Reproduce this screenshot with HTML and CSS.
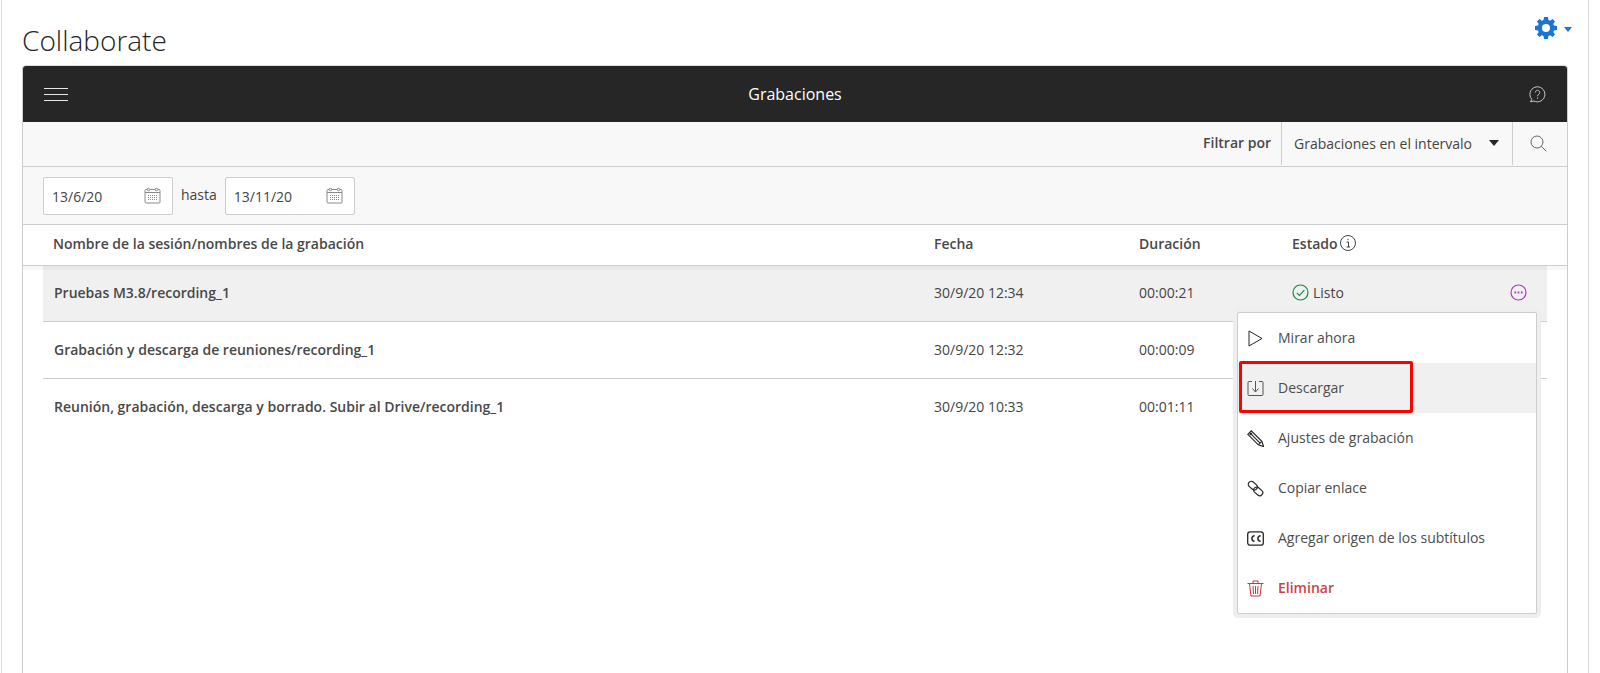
FILE: index.html
```html
<!DOCTYPE html>
<html lang="es">
<head>
<meta charset="utf-8">
<title>Collaborate</title>
<link rel="stylesheet" href="styles.css">
</head>
<body>
<div class="page">
  <div class="gear">
    <svg width="22" height="22" viewBox="0 0 22 22"><path fill="#1b76d3" fill-rule="evenodd" d="M9 0h4l.5 3 1.600.7L17.600 2 20 4.400l-1.700 2.500.7 1.600 3 .5v4l-3 .5-.7 1.600 1.700 2.500L17.600 20l-2.500-1.700-1.600.7-.5 3H9l-.5-3-1.600-.7L4.400 20 2 17.600l1.700-2.500-.7-1.600-3-.5v-4l3-.5.7-1.600L2 4.400 4.400 2l2.500 1.700 1.600-.7zM11 7a4 4 0 1 0 0 8 4 4 0 0 0 0-8z"/></svg>
    <span class="gear-caret"></span>
  </div>
  <h1 class="title">Collaborate</h1>
  <div class="panel">
    <header class="topbar">
      <span class="burger"><i></i><i></i><i></i></span>
      <span class="topbar-title">Grabaciones</span>
      <svg class="help" width="17" height="17" viewBox="0 0 17 17" fill="none" stroke="#c8c8c8"><path d="M2.800 13.300A7.500 7.500 0 1 1 5 15l-3.500.8z"/><path d="M6.300 6.500a2.200 2.200 0 1 1 3.400 1.900c-.8.5-1.200.9-1.200 1.900"/><path d="M8.500 11.500v1.300"/></svg>
    </header>
    <div class="filterbar">
      <span class="filter-label">Filtrar por</span>
      <span class="filter-select">Grabaciones en el intervalo<span class="select-caret"></span></span>
      <span class="filter-search">
        <svg width="17" height="17" viewBox="0 0 17 17" fill="none" stroke="#666"><circle cx="7" cy="7" r="6"/><path d="M11.300 11.300l5 5"/></svg>
      </span>
    </div>
    <div class="daterow">
      <span class="datebox">13/6/20
        <svg class="cal" width="17" height="17" viewBox="0 0 17 17" fill="none" stroke="#8a8a8a"><rect x="1" y="2.500" width="15" height="13.500" rx="1"/><path d="M1 5.500h15"/><circle cx="4.500" cy="2.500" r="1.300" fill="#f8f8f8"/><circle cx="12.500" cy="2.500" r="1.300" fill="#f8f8f8"/><path d="M4 8.500h9.500M4 10.500h9.500M4 12.500h9.500" stroke-dasharray="1 1"/></svg>
      </span>
      <span class="hasta">hasta</span>
      <span class="datebox">13/11/20
        <svg class="cal" width="17" height="17" viewBox="0 0 17 17" fill="none" stroke="#8a8a8a"><rect x="1" y="2.500" width="15" height="13.500" rx="1"/><path d="M1 5.500h15"/><circle cx="4.500" cy="2.500" r="1.300" fill="#f8f8f8"/><circle cx="12.500" cy="2.500" r="1.300" fill="#f8f8f8"/><path d="M4 8.500h9.500M4 10.500h9.500M4 12.500h9.500" stroke-dasharray="1 1"/></svg>
      </span>
    </div>
    <div class="thead">
      <span class="c-name">Nombre de la sesión/nombres de la grabación</span>
      <span class="c-date">Fecha</span>
      <span class="c-dur">Duración</span>
      <span class="c-state">Estado
        <svg class="info" width="16" height="16" viewBox="0 0 16 16" fill="none" stroke="#444"><circle cx="8" cy="8" r="7.500"/><path d="M6.500 7h2v5M6.500 12h3.500M8 3.800v1.400"/></svg>
      </span>
    </div>
    <div class="rows">
      <div class="row row-active">
        <span class="c-name">Pruebas M3.8/recording_1</span>
        <span class="c-date">30/9/20 12:34</span>
        <span class="c-dur">00:00:21</span>
        <span class="c-state state-ok">
          <svg width="17" height="17" viewBox="0 0 17 17" fill="none" stroke="#1a8a45" stroke-width="1.200"><circle cx="8.500" cy="8.500" r="7.500"/><path d="M4.800 8.800l2.600 2.600 5-5.200"/></svg>
          Listo
        </span>
        <svg class="more" width="17" height="17" viewBox="0 0 17 17" fill="none" stroke="#a83cc0" stroke-width="1.200"><circle cx="8.500" cy="8.500" r="7.500"/><path d="M4.500 8.500h1.600M7.700 8.500h1.600M10.900 8.500h1.600" stroke-width="1.800"/></svg>
      </div>
      <div class="row row-mid">
        <span class="c-name">Grabación y descarga de reuniones/recording_1</span>
        <span class="c-date">30/9/20 12:32</span>
        <span class="c-dur">00:00:09</span>
      </div>
      <div class="row row-last">
        <span class="c-name">Reunión, grabación, descarga y borrado. Subir al Drive/recording_1</span>
        <span class="c-date">30/9/20 10:33</span>
        <span class="c-dur">00:01:11</span>
      </div>
    </div>
  </div>
  <div class="menu">
    <div class="item">
      <svg width="17" height="17" viewBox="0 0 17 17" fill="none" stroke="#262626"><path d="M2 1v15l13-7.500z"/></svg>Mirar ahora
    </div>
    <div class="item item-hover">
      <svg width="17" height="17" viewBox="0 0 17 17" fill="none" stroke="#555"><path d="M5 1.500H2a1 1 0 0 0-1 1v12a1 1 0 0 0 1 1h13a1 1 0 0 0 1-1v-12a1 1 0 0 0-1-1h-3"/><path d="M8.500 1v10.500M5.500 8.500l3 3.500 3-3.500"/></svg>Descargar
    </div>
    <div class="item">
      <svg width="17" height="17" viewBox="0 0 17 17" fill="none" stroke="#262626" stroke-width="1.200"><path d="M.8 4.300L4.300.8l10.500 10.500 1.700 5.200-5.200-1.700z"/><path d="M2.600 2.600l10.500 10.500M2.800 5l2.200-2.200M11.300 14.800l3.500-3.500"/></svg>Ajustes de grabación
    </div>
    <div class="item">
      <svg width="17" height="17" viewBox="0 0 17 17" fill="none" stroke="#262626" stroke-width="1.200"><rect x=".8" y="2.600" width="10" height="6" rx="3" transform="rotate(40 5.800 5.600)"/><rect x="6.200" y="8.400" width="10" height="6" rx="3" transform="rotate(40 11.200 11.400)"/></svg>Copiar enlace
    </div>
    <div class="item">
      <svg width="17" height="17" viewBox="0 0 17 17" fill="none" stroke="#262626"><rect x=".7" y="1.800" width="15.600" height="13.400" rx="2.500" stroke-width="1.300"/><path d="M7.600 5.800a2.700 2.700 0 1 0 0 5.400M13.600 5.800a2.700 2.700 0 1 0 0 5.400" stroke-width="1.500"/></svg>Agregar origen de los subtítulos
    </div>
    <div class="item item-danger">
      <svg width="17" height="17" viewBox="0 0 17 17" fill="none" stroke="#c8373a"><path d="M.5 3.500h16M6 3.500V1h5v2.500M2.500 3.500L4 16h9l1.500-12.500M6 6l.5 8M8.500 6v8M11 6l-.5 8"/></svg>Eliminar
    </div>
  </div>
  <div class="callout"></div>
</div>
</body>
</html>
```

FILE: styles.css
```css
* { box-sizing: border-box; }
html, body { margin: 0; height: 100%; overflow: hidden; background: #fff; }
body { font-family: "Open Sans", sans-serif; font-size: 14px; color: #262626; }

.page {
  position: relative;
  width: 1588px;
  height: 673px;
  margin-left: 1px;
  padding: 0 20px;
  border-left: 1px solid #ddd;
  border-right: 1px solid #ddd;
}

.gear {
  position: absolute;
  top: 17px;
  left: 1533px;
  display: flex;
  align-items: center;
  gap: 7px;
}
.gear-caret {
  border-left: 4.500px solid transparent;
  border-right: 4.500px solid transparent;
  border-top: 5px solid #1b76d3;
  margin-top: 2px;
}

.title {
  margin: 0;
  padding-top: 20px;
  height: 65px;
  font-size: 28px;
  line-height: 40px;
  font-weight: 300;
  color: #262626;
}

.panel {
  height: 608px;
  border: 1px solid #cdcdcd;
  border-top: 1px solid #ddd;
  border-bottom: 0;
  border-radius: 4px 4px 0 0;
  background: #fff;
}

.topbar {
  height: 56px;
  background: #262626;
  border-radius: 3px 3px 0 0;
  color: #fff;
  display: flex;
  align-items: center;
  justify-content: space-between;
  padding: 0 21px 0 21px;
  position: relative;
}
.burger { display: flex; flex-direction: column; gap: 5px; width: 24px; }
.burger i { display: block; height: 1px; background: #e6e6e6; }
.topbar-title {
  position: absolute;
  left: 0;
  right: 0;
  text-align: center;
  font-size: 16px;
  font-weight: 500;
  line-height: 56px;
}

.filterbar {
  height: 45px;
  background: #f8f8f8;
  border-bottom: 1px solid #cdcdcd;
  display: flex;
  align-items: flex-start;
  justify-content: flex-end;
}
.filter-label { font-weight: 600; color: #484848; padding-right: 10px; line-height: 42px; border-right: 1px solid #cdcdcd; height: 43px; }
.filter-select {
  display: flex;
  align-items: center;
  justify-content: space-between;
  width: 231px;
  height: 43px;
  padding: 0 13px 1px 12px;
  color: #444;
  border-right: 1px solid #cdcdcd;
}
.select-caret {
  border-left: 5.500px solid transparent;
  border-right: 5.500px solid transparent;
  border-top: 6px solid #262626;
}
.filter-search { width: 54px; height: 43px; display: flex; align-items: center; padding-left: 17px; }

.daterow {
  height: 58px;
  background: #f8f8f8;
  border-bottom: 1px solid #cdcdcd;
  display: flex;
  align-items: center;
  padding: 0 0 0 20px;
}
.datebox {
  width: 130px;
  height: 38px;
  background: #fff;
  border: 1px solid #cdcdcd;
  border-radius: 2px;
  display: flex;
  align-items: center;
  justify-content: space-between;
  padding: 2px 11px 0 8px;
  color: #444;
}
.cal { margin-top: -2px; }
.hasta { color: #444; padding: 0 8px; margin-top: -3px; }

.thead, .row {
  display: grid;
  align-items: center;
}
.thead {
  position: relative;
  z-index: 1;
  grid-template-columns: 881px 205px 153px 1fr;
  height: 41px;
  padding: 0 0 4px 30px;
  font-weight: 600;
  color: #484848;
  border-bottom: 1px solid #cdcdcd;
  box-shadow: 0 4px 0 rgba(0, 0, 0, .03);
}
.c-state { display: flex; align-items: center; gap: 4px; }
.thead .c-state { gap: 2px; }
.rows { position: relative; padding: 0 20px; }
.row {
  position: relative;
  grid-template-columns: 880px 205px 153px 1fr;
  height: 57px;
  padding: 0 0 3px 11px;
  border-bottom: 1px solid #cdcdcd;
  color: #444;
}
.row .c-name { font-weight: 600; color: #484848; }
.row-active { background: #f0f0f0; height: 56px; }
.row-mid { padding-bottom: 2px; }
.row-last { border-bottom: 0; }
.more { position: absolute; right: 20px; top: 18px; }

.menu {
  position: absolute;
  left: 1235px;
  top: 312px;
  width: 300px;
  height: 302px;
  background: #fff;
  border: 1px solid #cdcdcd;
  border-radius: 2px;
  box-shadow: 0 0 0 4px #eee;
}
.item {
  height: 50px;
  display: flex;
  align-items: center;
  gap: 14px;
  padding: 0 0 2px 9px;
  color: #4d4d4d;
}
.item svg { margin-top: 2px; }
.item-hover { background: #f0f0f0; }
.item-danger { color: #c84545; font-weight: 600; }

.callout {
  position: absolute;
  left: 1237px;
  top: 361px;
  width: 174px;
  height: 52px;
  border: 3px solid #f00;
  border-radius: 2px;
}
```
